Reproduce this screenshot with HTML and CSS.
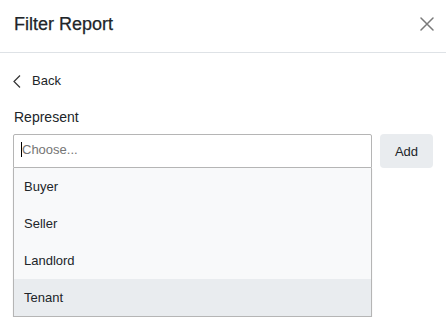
FILE: index.html
```html
<!DOCTYPE html>
<html lang="en">

<head>
    <meta charset="UTF-8">
    <meta name="viewport" content="width=device-width, initial-scale=1.0">
    <title>Filter Report</title>
    <link rel="stylesheet" href="styles.css">
</head>

<body>
    <div class="modal-header">
        <h1 class="modal-title">Filter Report</h1>
        <button class="close-btn" aria-label="Close">
            <svg width="14" height="14" viewBox="0 0 14 14">
                <path d="M1 1 L13 13 M13 1 L1 13" stroke="#7a7a7a" stroke-width="1.5" fill="none" stroke-linecap="round" />
            </svg>
        </button>
    </div>

    <div class="modal-body">
        <a class="back-link" href="#">
            <svg class="back-icon" width="8" height="13" viewBox="0 0 8 13">
                <polyline points="7,0.5 1,6.5 7,12.5" stroke="#333" stroke-width="1.2" fill="none" />
            </svg>
            <span>Back</span>
        </a>

        <div class="field-label">Represent</div>

        <div class="field-row">
            <div class="combo">
                <div class="combo-input">
                    <span class="caret"></span>
                    <span class="placeholder">Choose...</span>
                </div>
                <ul class="combo-menu">
                    <li class="combo-item">Buyer</li>
                    <li class="combo-item">Seller</li>
                    <li class="combo-item">Landlord</li>
                    <li class="combo-item active">Tenant</li>
                </ul>
            </div>
            <button class="add-btn">Add</button>
        </div>
    </div>
</body>

</html>
```

FILE: styles.css
```css
body {
    margin: 0;
    font-family: "Liberation Sans", Arial, sans-serif;
    color: #212529;
    background-color: #fff;
}

.modal-header {
    display: flex;
    justify-content: space-between;
    align-items: flex-start;
    padding: 13px 12px 17px 14px;
    border-bottom: 1px solid #dee2e6;
}

.modal-title {
    margin: 0;
    font-size: 18px;
    line-height: 22px;
    font-weight: normal;
    -webkit-text-stroke: 0.25px #212529;
}

.close-btn {
    margin-top: 4px;
    padding: 0;
    border: none;
    background: none;
    width: 14px;
    height: 14px;
    cursor: pointer;
}

.close-btn svg {
    display: block;
}

.modal-body {
    padding: 0 13px;
}

.back-link {
    display: flex;
    align-items: center;
    margin-top: 20px;
    font-size: 13px;
    line-height: 16px;
    color: #212529;
    text-decoration: none;
}

.back-icon {
    display: block;
    margin-right: 11px;
}

.field-label {
    margin-top: 20px;
    margin-left: 1px;
    font-size: 14px;
    line-height: 17px;
}

.field-row {
    display: flex;
    align-items: flex-start;
    gap: 8px;
    margin-top: 8px;
}

.combo {
    width: 359px;
}

.combo-input {
    display: flex;
    align-items: center;
    height: 32px;
    padding-left: 7px;
    border: 1px solid #b5b5b5;
    border-radius: 2px 2px 0 0;
    font-size: 13px;
}

.caret {
    width: 1px;
    height: 15px;
    margin-top: -4px;
    background-color: #000;
}

.placeholder {
    margin-top: -4px;
    color: #757575;
}

.combo-menu {
    margin: 0;
    padding: 0;
    list-style: none;
    border: 1px solid #b5b5b5;
    border-top: none;
    box-shadow: 0 1px 1px rgba(0, 0, 0, 0.12);
}

.combo-item {
    height: 37px;
    line-height: 37px;
    padding-left: 10px;
    font-size: 13px;
    background-color: #f8f9fa;
}

.combo-item.active {
    background-color: #e9ecef;
}

.add-btn {
    width: 53px;
    height: 34px;
    padding: 0;
    border: none;
    border-radius: 4px;
    background-color: #e9ecef;
    color: #212529;
    font-family: inherit;
    font-size: 13px;
    cursor: pointer;
}
```
